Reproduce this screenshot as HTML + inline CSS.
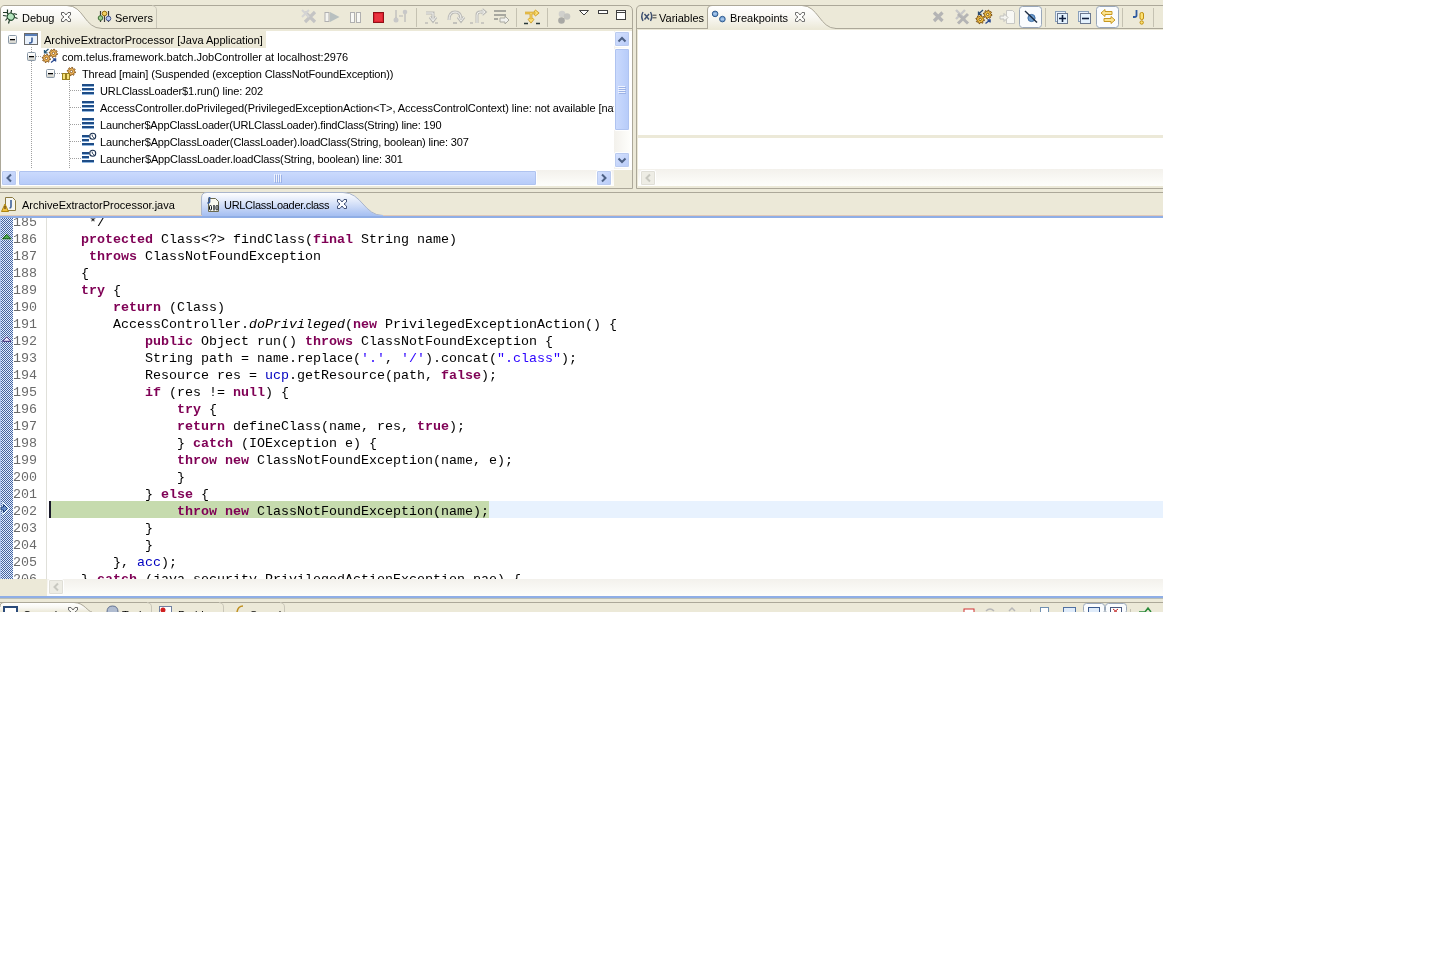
<!DOCTYPE html>
<html><head><meta charset="utf-8"><style>
*{box-sizing:border-box;margin:0;padding:0}
html,body{width:1440px;height:960px;background:#fff;overflow:hidden}
body{position:relative;font-family:"Liberation Sans",sans-serif;font-size:11px;color:#000}
.a{position:absolute}
svg{position:absolute;overflow:visible}
#app{position:absolute;left:0;top:0;width:1163px;height:612px;background:#ECE9D8;overflow:hidden;will-change:transform}
.t{position:absolute;white-space:nowrap;font-size:11px;line-height:17px}
.code{position:absolute;left:49px;white-space:pre;font-family:"Liberation Mono",monospace;font-size:13.33px;line-height:17px;height:17px}
.ln{position:absolute;left:13px;white-space:pre;font-family:"Liberation Mono",monospace;font-size:13.33px;line-height:17px;color:#6A6A6A}
.k{color:#7F0055;font-weight:bold}
.s{color:#2A00FF}
.f{color:#0000C0}
.i{font-style:italic}
.btn{position:absolute;width:16px;height:16px;border-radius:2px;background:linear-gradient(135deg,#D6E2FE,#B8CBF8);border:1px solid #fff;box-shadow:0 0 0 1px #BACBF0 inset}
.dbtn{position:absolute;width:16px;height:16px;border-radius:2px;background:#EEEDE5;border:1px solid #fff;box-shadow:0 0 0 1px #E0DFD7 inset}
.track{position:absolute;background:linear-gradient(#F3F1EC,#FEFEFB)}
.vtrack{position:absolute;background:linear-gradient(90deg,#F3F1EC,#FEFEFB)}
.thumbh{position:absolute;border-radius:2px;background:linear-gradient(#CCDBFD,#B6CBF9);border:1px solid #fff;box-shadow:0 0 0 1px #AFC3F0 inset}
.thumbv{position:absolute;border-radius:2px;background:linear-gradient(90deg,#CCDBFD,#B6CBF9);border:1px solid #fff;box-shadow:0 0 0 1px #AFC3F0 inset}
</style></head><body>
<div id="app">
<svg style="left:0;top:0" width="1163" height="612">
<defs>
<linearGradient id="tabw" x1="0" y1="0" x2="0" y2="1"><stop offset="0" stop-color="#FFFFFF"/><stop offset="0.5" stop-color="#F8F7F2"/><stop offset="1" stop-color="#ECE9D8"/></linearGradient>
<linearGradient id="tabb" x1="0" y1="0" x2="0" y2="1"><stop offset="0" stop-color="#FFFFFF"/><stop offset="0.35" stop-color="#E2EAFA"/><stop offset="1" stop-color="#A4BEF2"/></linearGradient>
<linearGradient id="expg" x1="0" y1="0" x2="0" y2="1"><stop offset="0" stop-color="#FFFFFF"/><stop offset="0.5" stop-color="#F4F4F2"/><stop offset="1" stop-color="#C8C8C0"/></linearGradient>
</defs>
<path d="M0.5,188.5 V10 Q0.5,5.5 5,5.5 H627 Q632.5,5.5 632.5,11 V188.5 Z" fill="#ECE9D8" stroke="#ACA899"/>
<path d="M1,29 V10 Q1,6 5,6 H67 C84,6 84,28 102,28.5 H1 Z" fill="url(#tabw)"/>
<path d="M67,5.5 C84,5.5 84,28.5 102,28.5 H632" fill="none" stroke="#ACA899"/>
<path d="M156.5,28 V10 Q156.5,6 152,5.5" fill="none" stroke="#C9C6B8"/>
<path d="M636.5,188.5 V10 Q636.5,5.5 641,5.5 H1163" fill="none" stroke="#ACA899"/>
<path d="M636.5,188.5 H1163 M636.5,28.5 H708 M835,28.5 H1163" stroke="#ACA899"/>
<path d="M708,29 V10 Q708,6 712,6 H802 C818,6 820,28 836,28.5 H708 Z" fill="url(#tabw)"/>
<path d="M707.5,28 V10 Q707.5,5.5 712,5.5 H802 C818,5.5 820,28.5 836,28.5" fill="none" stroke="#ACA899"/>
<path d="M0,192.5 H1163" stroke="#ACA899"/>
<path d="M201.5,216 V198 Q201.5,192.5 207,192.5 H343 C362,192.5 364,215.5 383,215.5 Z" fill="url(#tabb)" stroke="#A9B5CC"/>
<rect x="0" y="215" width="1163" height="1" fill="#E0C8B8"/>
<rect x="202" y="215" width="181" height="1" fill="#A8C0F0"/>
<rect x="0" y="216" width="1163" height="2" fill="#8FAEE6"/>
<rect x="0" y="596" width="1163" height="2" fill="#8FAEE6"/><rect x="0" y="598" width="1163" height="1" fill="#B8BEB8"/>
<path d="M0,602.5 H1163" stroke="#ACA899"/>
<path d="M0,612 V607 Q0,603 4,603 H74 C84,603 88,612 92,612 Z" fill="url(#tabw)"/>
<path d="M0,607 Q0,602.5 4,602.5 H74 C84,602.5 88,612 92,612" fill="none" stroke="#ACA899"/>
<path d="M151.5,612 V607 Q151.5,603 147,602.5 M223.5,612 V607 Q223.5,603 219,602.5 M284.5,612 V607 Q284.5,603 280,602.5" fill="none" stroke="#C9C6B8"/>
</svg>
<div class="t" style="left:22px;top:10px;">Debug</div>
<div class="t" style="left:115px;top:10px;">Servers</div>
<div class="a" style="left:1px;top:31px;width:631px;height:139px;background:#fff"></div>
<div class="a" style="left:41px;top:31px;width:225px;height:17px;background:#ECE9D8"></div>
<div class="a" style="left:0;top:0;width:614px;height:170px;overflow:hidden">
<div class="t" style="left:44px;top:32px;letter-spacing:0px">ArchiveExtractorProcessor [Java Application]</div>
<div class="t" style="left:62px;top:49px;letter-spacing:0px">com.telus.framework.batch.JobController at localhost:2976</div>
<div class="t" style="left:82px;top:66px;letter-spacing:-0.12px">Thread [main] (Suspended (exception ClassNotFoundException))</div>
<div class="t" style="left:100px;top:83px;letter-spacing:-0.12px">URLClassLoader$1.run() line: 202</div>
<div class="t" style="left:100px;top:100px;letter-spacing:-0.07px">AccessController.doPrivileged(PrivilegedExceptionAction&lt;T&gt;, AccessControlContext) line: not available [native method]</div>
<div class="t" style="left:100px;top:117px;letter-spacing:-0.18px">Launcher$AppClassLoader(URLClassLoader).findClass(String) line: 190</div>
<div class="t" style="left:100px;top:134px;letter-spacing:-0.15px">Launcher$AppClassLoader(ClassLoader).loadClass(String, boolean) line: 307</div>
<div class="t" style="left:100px;top:151px;letter-spacing:-0.12px">Launcher$AppClassLoader.loadClass(String, boolean) line: 301</div>
</div>
<svg style="left:0;top:0" width="1163" height="612"><path d="M31.5,47 V168 M69.5,81 V168" stroke="#A0A0A0" stroke-dasharray="1 1"/><path d="M36,56.5 H42 M55,73.5 H62" stroke="#A0A0A0" stroke-dasharray="1 1"/><path d="M70,90.5 H81" stroke="#A0A0A0" stroke-dasharray="1 1"/><path d="M70,107.5 H81" stroke="#A0A0A0" stroke-dasharray="1 1"/><path d="M70,124.5 H81" stroke="#A0A0A0" stroke-dasharray="1 1"/><path d="M70,141.5 H81" stroke="#A0A0A0" stroke-dasharray="1 1"/><path d="M70,158.5 H81" stroke="#A0A0A0" stroke-dasharray="1 1"/><rect x="8.5" y="35.5" width="8" height="8" rx="1" fill="url(#expg)" stroke="#8A99A8"/><rect x="10" y="39" width="5" height="1.3" fill="#000"/><rect x="27.5" y="52.5" width="8" height="8" rx="1" fill="url(#expg)" stroke="#8A99A8"/><rect x="29" y="56" width="5" height="1.3" fill="#000"/><rect x="46.5" y="69.5" width="8" height="8" rx="1" fill="url(#expg)" stroke="#8A99A8"/><rect x="48" y="73" width="5" height="1.3" fill="#000"/><rect x="24.5" y="33.5" width="13" height="11" fill="#EAF2FC" stroke="#6B6B6B"/><rect x="25" y="34" width="12" height="2" fill="#5A7FB8"/><path d="M32,37.5 V41 Q32,43 30,43 H29" fill="none" stroke="#3C5F9A" stroke-width="1.6"/><path d="M57.58,53.71 L57.42,54.52 L56.07,54.73 L55.74,55.22 L56.06,56.55 L55.38,57.00 L54.28,56.19 L53.70,56.31 L52.99,57.48 L52.18,57.32 L51.97,55.97 L51.48,55.64 L50.15,55.96 L49.70,55.28 L50.51,54.18 L50.39,53.60 L49.22,52.89 L49.38,52.08 L50.73,51.87 L51.06,51.38 L50.74,50.05 L51.42,49.60 L52.52,50.41 L53.10,50.29 L53.81,49.12 L54.62,49.28 L54.83,50.63 L55.32,50.96 L56.65,50.64 L57.10,51.32 L56.29,52.42 L56.41,53.00Z" fill="#F2B85A" stroke="#7A4A10" stroke-width="0.9"/><circle cx="53.4" cy="53.3" r="1.2" fill="#fff" stroke="#7A4A10" stroke-width="0.8"/><path d="M50.58,58.81 L50.42,59.62 L49.07,59.83 L48.74,60.32 L49.06,61.65 L48.38,62.10 L47.28,61.29 L46.70,61.41 L45.99,62.58 L45.18,62.42 L44.97,61.07 L44.48,60.74 L43.15,61.06 L42.70,60.38 L43.51,59.28 L43.39,58.70 L42.22,57.99 L42.38,57.18 L43.73,56.97 L44.06,56.48 L43.74,55.15 L44.42,54.70 L45.52,55.51 L46.10,55.39 L46.81,54.22 L47.62,54.38 L47.83,55.73 L48.32,56.06 L49.65,55.74 L50.10,56.42 L49.29,57.52 L49.41,58.10Z" fill="#F2B85A" stroke="#7A4A10" stroke-width="0.9"/><circle cx="46.4" cy="58.4" r="1.2" fill="#fff" stroke="#7A4A10" stroke-width="0.8"/><path d="M48.5,49 L44.5,52.5 M44.5,50 V52.8 H47.5" fill="none" stroke="#2A5A78" stroke-width="1.3"/><path d="M51,62.5 L55.5,59 M52.8,58.8 H55.6 V61.6" fill="none" stroke="#2A4A90" stroke-width="1.3"/><path d="M75.58,71.91 L75.42,72.72 L74.07,72.93 L73.74,73.42 L74.06,74.75 L73.38,75.20 L72.28,74.39 L71.70,74.51 L70.99,75.68 L70.18,75.52 L69.97,74.17 L69.48,73.84 L68.15,74.16 L67.70,73.48 L68.51,72.38 L68.39,71.80 L67.22,71.09 L67.38,70.28 L68.73,70.07 L69.06,69.58 L68.74,68.25 L69.42,67.80 L70.52,68.61 L71.10,68.49 L71.81,67.32 L72.62,67.48 L72.83,68.83 L73.32,69.16 L74.65,68.84 L75.10,69.52 L74.29,70.62 L74.41,71.20Z" fill="#F2B85A" stroke="#7A4A10" stroke-width="0.9"/><circle cx="71.4" cy="71.5" r="1.2" fill="#fff" stroke="#7A4A10" stroke-width="0.8"/><rect x="62.5" y="73.5" width="3" height="6" fill="#F6E27A" stroke="#9A8020"/><rect x="66.5" y="73.5" width="3" height="6" fill="#F6E27A" stroke="#9A8020"/><rect x="82" y="84" width="12" height="2" fill="#1E4C86"/><rect x="82" y="86" width="12" height="1" fill="#8FB6E0"/><rect x="82" y="88" width="12" height="2" fill="#1E4C86"/><rect x="82" y="90" width="12" height="1" fill="#8FB6E0"/><rect x="82" y="92" width="12" height="2" fill="#1E4C86"/><rect x="82" y="94" width="12" height="1" fill="#8FB6E0"/><rect x="82" y="101" width="12" height="2" fill="#1E4C86"/><rect x="82" y="103" width="12" height="1" fill="#8FB6E0"/><rect x="82" y="105" width="12" height="2" fill="#1E4C86"/><rect x="82" y="107" width="12" height="1" fill="#8FB6E0"/><rect x="82" y="109" width="12" height="2" fill="#1E4C86"/><rect x="82" y="111" width="12" height="1" fill="#8FB6E0"/><rect x="82" y="118" width="12" height="2" fill="#1E4C86"/><rect x="82" y="120" width="12" height="1" fill="#8FB6E0"/><rect x="82" y="122" width="12" height="2" fill="#1E4C86"/><rect x="82" y="124" width="12" height="1" fill="#8FB6E0"/><rect x="82" y="126" width="12" height="2" fill="#1E4C86"/><rect x="82" y="128" width="12" height="1" fill="#8FB6E0"/><rect x="82" y="135" width="7" height="2" fill="#1E4C86"/><rect x="82" y="137" width="7" height="1" fill="#8FB6E0"/><rect x="82" y="139" width="7" height="2" fill="#1E4C86"/><rect x="82" y="141" width="7" height="1" fill="#8FB6E0"/><rect x="82" y="143" width="12" height="2" fill="#1E4C86"/><rect x="82" y="145" width="12" height="1" fill="#8FB6E0"/><circle cx="92.7" cy="136.3" r="3" fill="#fff" stroke="#1A3050" stroke-width="1.1"/><path d="M92,134.5 L92.5,136.5 L94,137.8" fill="none" stroke="#1A3050" stroke-width="0.9"/><rect x="82" y="152" width="7" height="2" fill="#1E4C86"/><rect x="82" y="154" width="7" height="1" fill="#8FB6E0"/><rect x="82" y="156" width="7" height="2" fill="#1E4C86"/><rect x="82" y="158" width="7" height="1" fill="#8FB6E0"/><rect x="82" y="160" width="12" height="2" fill="#1E4C86"/><rect x="82" y="162" width="12" height="1" fill="#8FB6E0"/><circle cx="92.7" cy="153.3" r="3" fill="#fff" stroke="#1A3050" stroke-width="1.1"/><path d="M92,151.5 L92.5,153.5 L94,154.8" fill="none" stroke="#1A3050" stroke-width="0.9"/></svg>
<div class="vtrack" style="left:614px;top:31px;width:16px;height:138px"></div>
<div class="btn" style="left:614px;top:31px"></div>
<div class="thumbv" style="left:614px;top:48px;width:16px;height:83px"></div>
<div class="btn" style="left:614px;top:152px"></div>
<div class="track" style="left:1px;top:170px;width:613px;height:16px"></div>
<div class="btn" style="left:1px;top:170px"></div>
<div class="thumbh" style="left:18px;top:170px;width:519px;height:16px"></div>
<div class="btn" style="left:596px;top:170px"></div>
<svg style="left:0;top:0" width="1163" height="612"><path d="M618.5,41.5 L622,38 L625.5,41.5" fill="none" stroke="#4D6185" stroke-width="2"/><path d="M618.5,158.5 L622,162 L625.5,158.5" fill="none" stroke="#4D6185" stroke-width="2"/><path d="M11,174.5 L7.5,178 L11,181.5" fill="none" stroke="#4D6185" stroke-width="2"/><path d="M602,174.5 L605.5,178 L602,181.5" fill="none" stroke="#4D6185" stroke-width="2"/><path d="M618,86.5 H625 M618,88.5 H625 M618,90.5 H625 M618,92.5 H625" stroke="#EEF3FE" stroke-width="1"/><path d="M619,87.5 H626 M619,89.5 H626 M619,91.5 H626 M619,93.5 H626" stroke="#9CB2E6" stroke-width="1"/><path d="M274.5,174 V182 M276.5,174 V182 M278.5,174 V182 M280.5,174 V182" stroke="#EEF3FE" stroke-width="1"/><path d="M275.5,175 V183 M277.5,175 V183 M279.5,175 V183 M281.5,175 V183" stroke="#9CB2E6" stroke-width="1"/><path d="M58,583.5 L54.5,587 L58,590.5" fill="none" stroke="#C8C8C0" stroke-width="2"/></svg>
<svg style="left:0;top:0" width="1163" height="612"><ellipse cx="10.8" cy="16.7" rx="3.6" ry="3.4" transform="rotate(35 10.8 16.7)" fill="#B5E4BE" stroke="#1F4A2A" stroke-width="1.1"/><path d="M3,12.5 H8 M7.5,9.5 V14 M11.5,10 L11,13 M13.5,13.5 L17,14.5 M3,15.5 L6.5,16 M15,17.5 L17.5,18.5 M5.5,20.5 L7.5,18 M8.5,23.5 L9.5,20" stroke="#1F3A28" stroke-width="1.2"/><path d="M61.5,12.5 H64 L66,15 L68,12.5 H70.5 V15 L68,17 L70.5,19 V21.5 H68 L66,19 L64,21.5 H61.5 V19 L64,17 L61.5,15 Z" fill="#fff" fill-opacity="0.6" stroke="#5A5A5A" stroke-width="0.95"/><path d="M100.5,11 V22 M104.5,11 V22 M108.5,11 V22" stroke="#3A3A3A" stroke-width="1.2"/><circle cx="100.5" cy="18" r="2.3" fill="#9ED090" stroke="#3A6A30"/><circle cx="104.5" cy="13.5" r="2.3" fill="#F2D060" stroke="#9A7010"/><circle cx="108.5" cy="18.5" r="2.3" fill="#B8C8F0" stroke="#4A5A90"/><path d="M643,12 Q640.5,16.5 643,21 M650.5,12 Q653,16.5 650.5,21 M644.5,14 L649,19.5 M649,14 L644.5,19.5" fill="none" stroke="#3E5070" stroke-width="1.4"/><path d="M652.5,15.2 H656.5 M652.5,17.8 H656.5" stroke="#404040" stroke-width="1"/><circle cx="715.1" cy="13.9" r="2.8" fill="#7EA8D8" stroke="#2E5A8E"/><circle cx="722.4" cy="19.1" r="2.8" fill="#7EA8D8" stroke="#2E5A8E"/><path d="M713.5,13.9 H716.7 M720.8,19.1 H724" stroke="#DDEEFF" stroke-width="0.8"/><path d="M795.5,12.5 H798 L800,15 L802,12.5 H804.5 V15 L802,17 L804.5,19 V21.5 H802 L800,19 L798,21.5 H795.5 V19 L798,17 L795.5,15 Z" fill="#fff" fill-opacity="0.6" stroke="#6A6A6A" stroke-width="0.95"/><path d="M5.5,197.5 H12.5 L15.5,200.5 V210.5 H5.5 Z" fill="#F6F6F0" stroke="#8A7A40"/><path d="M11,200 V206.5 Q11,208 9.5,208" fill="none" stroke="#3C5F9A" stroke-width="1.6"/><path d="M5,204 L8.5,211.5 H1.5 Z" fill="#F0C040" stroke="#B08810"/><path d="M5,206 V209" stroke="#402000" stroke-width="1"/><path d="M208.5,198.5 H215.5 L218.5,201.5 V211.5 H208.5 Z" fill="#FAFAF0" stroke="#6A6A50"/><path d="M209.5,197 V201.5 Q209.5,203 207.5,203" fill="none" stroke="#3C5F9A" stroke-width="1.8"/><rect x="209.5" y="205.5" width="2" height="4.5" rx="1" fill="none" stroke="#101820" stroke-width="1"/><path d="M214,205 V210.5" stroke="#101820" stroke-width="1.3"/><rect x="216" y="205.5" width="2" height="4.5" rx="1" fill="none" stroke="#101820" stroke-width="1"/><path d="M337.5,199.5 H340 L342,202 L344,199.5 H346.5 V202 L344,204 L346.5,206 V208.5 H344 L342,206 L340,208.5 H337.5 V206 L340,204 L337.5,202 Z" fill="#fff" fill-opacity="0.9" stroke="#3A4A70" stroke-width="0.95"/></svg>
<svg style="left:0;top:0" width="1163" height="612"><path d="M305,12 L315,22 M315,12 L305,22" stroke="#C4C4C4" stroke-width="3.2"/><path d="M302,10 L309,17 M309,10 L302,17" stroke="#D4D4D4" stroke-width="2"/><rect x="325" y="12.5" width="4" height="9" fill="#F4F4F0" stroke="#B0B0B0"/><path d="M330,12 L339.5,17 L330,22 Z" fill="#B8C0C0"/><rect x="350.5" y="12.5" width="4" height="10" fill="#F8F8F4" stroke="#B0B0B0"/><rect x="356.5" y="12.5" width="4" height="10" fill="#F8F8F4" stroke="#B0B0B0"/><rect x="373.5" y="12.5" width="10" height="10" fill="#E02030" stroke="#901018"/><rect x="375" y="14" width="7" height="7" fill="#E8343F"/><circle cx="396" cy="20" r="2.5" fill="#C8C8C8"/><circle cx="405" cy="12" r="2.3" fill="#C8C8C8"/><path d="M396,10 V18 M405,14 V22 M399,16 H403" stroke="#B8B8B8" stroke-width="1.2"/><rect x="416" y="8" width="1" height="19" fill="#C5C2B2"/><path d="M426,13 H433 V20 M430,17 L433,21 L436,17" fill="none" stroke="#BCBCB8" stroke-width="3"/><path d="M426,13 H433 V20 M430,17 L433,21 L436,17" fill="none" stroke="#F2F2EE" stroke-width="1"/><path d="M425,23 H428 M435,23 H438" stroke="#A8A8A8" stroke-width="1.2"/><path d="M449,20 Q449,12 455,12 Q461,12 461,19 M458,17 L461,21 L464,17" fill="none" stroke="#BCBCB8" stroke-width="3"/><path d="M449,20 Q449,12 455,12 Q461,12 461,19 M458,17 L461,21 L464,17" fill="none" stroke="#F2F2EE" stroke-width="1"/><path d="M453,23 H457" stroke="#A8A8A8" stroke-width="1.2"/><path d="M477,23 V15 Q477,12 480,12 H484 M482,9.5 L485,12 L482,14.5" fill="none" stroke="#BCBCB8" stroke-width="3"/><path d="M477,23 V15 Q477,12 480,12 H484 M482,9.5 L485,12 L482,14.5" fill="none" stroke="#F2F2EE" stroke-width="1"/><path d="M470,23 H473 M481,23 H484" stroke="#A8A8A8" stroke-width="1.2"/><rect x="494" y="10" width="12" height="2" fill="#A8A8A0"/><rect x="494" y="14" width="12" height="2" fill="#A8A8A0"/><rect x="494" y="18" width="4" height="2" fill="#A8A8A0"/><path d="M500,18 H505 V16 L509,20 L505,24 V22 H500 Z" fill="#F0F0EC" stroke="#A8A8A0"/><rect x="516" y="8" width="1" height="19" fill="#C5C2B2"/><path d="M525,13 H537 M534.5,10.5 L537.5,13 L534.5,15.5 M531,13 V21 M528.5,18.5 L531,21.5 L533.5,18.5" fill="none" stroke="#C89010" stroke-width="2.6"/><path d="M525,13 H537 M534.5,10.5 L537.5,13 L534.5,15.5 M531,13 V21 M528.5,18.5 L531,21.5 L533.5,18.5" fill="none" stroke="#FCE27A" stroke-width="1.2"/><path d="M524,23.5 H528 M536,23.5 H540" stroke="#2A3A3A" stroke-width="1.5"/><rect x="547" y="8" width="1" height="19" fill="#C5C2B2"/><circle cx="562" cy="14" r="3.3" fill="#D0D0CC"/><circle cx="567" cy="16.5" r="3.3" fill="#C4C4C0"/><circle cx="561.5" cy="20.5" r="3.3" fill="#A8A8A4"/><path d="M579.5,10.5 H588.5 L584,15 Z" fill="#fff" stroke="#404040"/><rect x="598.5" y="10.5" width="9" height="3" fill="#fff" stroke="#404040"/><rect x="616.5" y="10.5" width="9" height="9" fill="#fff" stroke="#404040"/><path d="M617,12.5 H625" stroke="#404040" stroke-width="1"/></svg>
<svg style="left:0;top:0" width="1163" height="612"><path d="M934,12.5 L942.5,21 M942.5,12.5 L934,21" stroke="#B4B4B4" stroke-width="3.2"/><path d="M956,10 L965,19 M965,10 L956,19" stroke="#C8C8C8" stroke-width="2.4"/><path d="M958,14 L968,23.5 M968,14 L958,23.5" stroke="#B4B4B4" stroke-width="3"/><path d="M991.98,14.82 L991.81,15.65 L990.43,15.86 L990.09,16.36 L990.43,17.72 L989.73,18.19 L988.60,17.36 L988.00,17.48 L987.28,18.68 L986.45,18.51 L986.24,17.13 L985.74,16.79 L984.38,17.13 L983.91,16.43 L984.74,15.30 L984.62,14.70 L983.42,13.98 L983.59,13.15 L984.97,12.94 L985.31,12.44 L984.97,11.08 L985.67,10.61 L986.80,11.44 L987.40,11.32 L988.12,10.12 L988.95,10.29 L989.16,11.67 L989.66,12.01 L991.02,11.67 L991.49,12.37 L990.66,13.50 L990.78,14.10Z" fill="#F2C040" stroke="#6A4008" stroke-width="0.9"/><circle cx="987.7" cy="14.4" r="1.2" fill="#FFF6C0" stroke="#6A4008" stroke-width="0.8"/><path d="M984.48,19.82 L984.31,20.65 L982.93,20.86 L982.59,21.36 L982.93,22.72 L982.23,23.19 L981.10,22.36 L980.50,22.48 L979.78,23.68 L978.95,23.51 L978.74,22.13 L978.24,21.79 L976.88,22.13 L976.41,21.43 L977.24,20.30 L977.12,19.70 L975.92,18.98 L976.09,18.15 L977.47,17.94 L977.81,17.44 L977.47,16.08 L978.17,15.61 L979.30,16.44 L979.90,16.32 L980.62,15.12 L981.45,15.29 L981.66,16.67 L982.16,17.01 L983.52,16.67 L983.99,17.37 L983.16,18.50 L983.28,19.10Z" fill="#F2C040" stroke="#6A4008" stroke-width="0.9"/><circle cx="980.2" cy="19.4" r="1.2" fill="#FFF6C0" stroke="#6A4008" stroke-width="0.8"/><path d="M983,10 L978.5,14 M978.5,11.5 V14.3 H981.5" fill="none" stroke="#2A4A70" stroke-width="1.3"/><path d="M985.5,23.5 L990,20 M987.3,19.8 H990.1 V22.6" fill="none" stroke="#2A4A90" stroke-width="1.3"/><path d="M1006.5,10.5 H1012.5 L1014.5,12.5 V23.5 H1006.5 Z" fill="#F8F8F4" stroke="#C8C8C4"/><path d="M1000,16 H1004 V13.5 L1008,17.5 L1004,21.5 V19 H1000 Z" fill="#F4F4F0" stroke="#C0C0BC"/><rect x="1019.5" y="6.5" width="22" height="21" rx="3" fill="#FAFCFE" stroke="#9AA8BA"/><circle cx="1031.5" cy="18" r="3.6" fill="#6E9ED0" stroke="#3D6EA6"/><path d="M1025,11 L1037,22.5" stroke="#1A2A40" stroke-width="1.4"/><rect x="1045" y="8" width="1" height="19" fill="#C5C2B2"/><rect x="1055.5" y="11.5" width="10" height="10" fill="#E8F0FA" stroke="#8AA0BA"/><rect x="1057.5" y="13.5" width="10" height="10" fill="#E4F2FE" stroke="#6A7890"/><path d="M1062.5,15 V22 M1059,18.5 H1066" stroke="#102040" stroke-width="1.6"/><rect x="1078.5" y="11.5" width="10" height="10" fill="#E8F0FA" stroke="#8AA0BA"/><rect x="1080.5" y="13.5" width="10" height="10" fill="#E4F2FE" stroke="#6A7890"/><path d="M1082,18.5 H1089" stroke="#102040" stroke-width="1.6"/><rect x="1096.5" y="6.5" width="22" height="21" rx="3" fill="#FAFCFE" stroke="#9AA8BA"/><path d="M1101,13 L1105,9.5 V11.5 H1112 V14.5 H1105 V16.5 Z" fill="#FCE490" stroke="#C89820"/><path d="M1115,20 L1111,16.5 V18.5 H1104 V21.5 H1111 V23.5 Z" fill="#FCE490" stroke="#C89820"/><rect x="1122" y="8" width="1" height="19" fill="#C5C2B2"/><path d="M1136.5,10 V15.5 Q1136.5,17 1134.5,17 H1133" fill="none" stroke="#2E5AA0" stroke-width="1.8"/><rect x="1140" y="12.5" width="3.5" height="7" rx="1.5" fill="#FCE070" stroke="#C09010"/><circle cx="1141.7" cy="22.5" r="1.7" fill="#FCE070" stroke="#C09010"/><rect x="1153" y="8" width="1" height="19" fill="#C5C2B2"/></svg>
<div class="t" style="left:659px;top:10px;">Variables</div>
<div class="t" style="left:730px;top:10px;">Breakpoints</div>
<div class="a" style="left:638px;top:30px;width:525px;height:105px;background:#fff"></div>
<div class="a" style="left:638px;top:138px;width:525px;height:31px;background:#fff"></div>
<div class="track" style="left:638px;top:169px;width:525px;height:17px"></div>
<div class="dbtn" style="left:640px;top:170px"></div>
<svg style="left:0;top:0" width="1163" height="612"><path d="M650,174.5 L646.5,178 L650,181.5" fill="none" stroke="#C8C8C0" stroke-width="2"/></svg>
<div class="t" style="left:22px;top:197px;">ArchiveExtractorProcessor.java</div>
<div class="t" style="left:224px;top:197px;letter-spacing:-0.3px">URLClassLoader.class</div>
<div class="a" style="left:0;top:218px;width:1163px;height:361px;background:#fff;overflow:hidden">
<div class="a" style="left:0px;top:0px;width:13px;height:361px;background:#A9C0EA"></div>
<div class="a" style="left:1px;top:0px;width:12px;height:361px;background:conic-gradient(#46649F 25%,#E2EEFF 0 50%,#46649F 0 75%,#E2EEFF 0) 0 0/2px 2px"></div>
<div class="a" style="left:46px;top:0px;width:1px;height:361px;background:#E0E0DA"></div>
<div class="a" style="left:51px;top:283px;width:1112px;height:17px;background:#E8F2FE"></div>
<div class="a" style="left:51px;top:283px;width:438px;height:17px;background:#C6DBAE"></div>
<div class="a" style="left:49px;top:283px;width:2px;height:17px;background:#1A1A2A"></div>
<div class="ln" style="top:-4px">185</div>
<div class="code" style="top:-4px">     */</div>
<div class="ln" style="top:13px">186</div>
<div class="code" style="top:13px">    <span class="k">protected</span> Class&lt;?&gt; findClass(<span class="k">final</span> String name)</div>
<div class="ln" style="top:30px">187</div>
<div class="code" style="top:30px">     <span class="k">throws</span> ClassNotFoundException</div>
<div class="ln" style="top:47px">188</div>
<div class="code" style="top:47px">    {</div>
<div class="ln" style="top:64px">189</div>
<div class="code" style="top:64px">    <span class="k">try</span> {</div>
<div class="ln" style="top:81px">190</div>
<div class="code" style="top:81px">        <span class="k">return</span> (Class)</div>
<div class="ln" style="top:98px">191</div>
<div class="code" style="top:98px">        AccessController.<span class="i">doPrivileged</span>(<span class="k">new</span> PrivilegedExceptionAction() {</div>
<div class="ln" style="top:115px">192</div>
<div class="code" style="top:115px">            <span class="k">public</span> Object run() <span class="k">throws</span> ClassNotFoundException {</div>
<div class="ln" style="top:132px">193</div>
<div class="code" style="top:132px">            String path = name.replace(<span class="s">&#x27;.&#x27;</span>, <span class="s">&#x27;/&#x27;</span>).concat(<span class="s">&quot;.class&quot;</span>);</div>
<div class="ln" style="top:149px">194</div>
<div class="code" style="top:149px">            Resource res = <span class="f">ucp</span>.getResource(path, <span class="k">false</span>);</div>
<div class="ln" style="top:166px">195</div>
<div class="code" style="top:166px">            <span class="k">if</span> (res != <span class="k">null</span>) {</div>
<div class="ln" style="top:183px">196</div>
<div class="code" style="top:183px">                <span class="k">try</span> {</div>
<div class="ln" style="top:200px">197</div>
<div class="code" style="top:200px">                <span class="k">return</span> defineClass(name, res, <span class="k">true</span>);</div>
<div class="ln" style="top:217px">198</div>
<div class="code" style="top:217px">                } <span class="k">catch</span> (IOException e) {</div>
<div class="ln" style="top:234px">199</div>
<div class="code" style="top:234px">                <span class="k">throw</span> <span class="k">new</span> ClassNotFoundException(name, e);</div>
<div class="ln" style="top:251px">200</div>
<div class="code" style="top:251px">                }</div>
<div class="ln" style="top:268px">201</div>
<div class="code" style="top:268px">            } <span class="k">else</span> {</div>
<div class="ln" style="top:285px">202</div>
<div class="code" style="top:285px">                <span class="k">throw</span> <span class="k">new</span> ClassNotFoundException(name);</div>
<div class="ln" style="top:302px">203</div>
<div class="code" style="top:302px">            }</div>
<div class="ln" style="top:319px">204</div>
<div class="code" style="top:319px">            }</div>
<div class="ln" style="top:336px">205</div>
<div class="code" style="top:336px">        }, <span class="f">acc</span>);</div>
<div class="ln" style="top:353px">206</div>
<div class="code" style="top:353px">    } <span class="k">catch</span> (java.security.PrivilegedActionException pae) {</div>

</div>
<div class="track" style="left:0;top:579px;width:1163px;height:17px"></div>
<div class="a" style="left:0px;top:579px;width:47px;height:17px;background:#ECE9D8"></div>
<div class="dbtn" style="left:48px;top:579px"></div>
<svg style="left:0;top:0" width="1163" height="612"><path d="M58,583.5 L54.5,587 L58,590.5" fill="none" stroke="#C8C8C0" stroke-width="2"/></svg>
<svg style="left:0;top:0" width="1163" height="612"><path d="M1.5,239.5 L6.7,233.5 L12,239.5 Z" fill="#E8FFF0"/><path d="M2.5,238.8 L6.7,234.3 L11,238.8 Z" fill="#4AAA4A" stroke="#0A4A12" stroke-width="1"/><path d="M1.5,342 L6.7,336 L12,342 Z" fill="#F4F8FF"/><path d="M2.5,341.3 L6.7,336.8 L11,341.3 Z" fill="#F0E8FF" stroke="#2A1A6A" stroke-width="1"/><path d="M1,507 H3.5 V504 L8,508.5 L3.5,513 V510 H1 Z" fill="#E8F8FF" stroke="#E8F8FF" stroke-width="2"/><path d="M1,507 H3.5 V504.5 L7.5,508.5 L3.5,512.5 V510 H1 Z" fill="#6A90C8" stroke="#183A78" stroke-width="1"/></svg>
<svg style="left:0;top:0" width="1163" height="612"><rect x="4" y="607" width="13" height="8" fill="#fff" stroke="#2A4A7A" stroke-width="2"/><path d="M68.5,607.5 H71 L73,610 L75,607.5 H77.5 V610 L75,612 L77.5,614 V616.5 H75 L73,614 L71,616.5 H68.5 V614 L71,612 L68.5,610 Z" fill="#fff" fill-opacity="0.6" stroke="#606060" stroke-width="0.95"/><path d="M107,612 Q107,606 112.5,606 Q118,606 118,612" fill="#B0BCD0" stroke="#607090"/><rect x="159.5" y="606.5" width="12" height="8" fill="#fff" stroke="#7080A0"/><circle cx="163" cy="610" r="2.5" fill="#D02020"/><path d="M237,612 Q238,606 243,606" fill="none" stroke="#C09020" stroke-width="1.5"/><rect x="964" y="609" width="10" height="4" fill="#fff" stroke="#D03030"/><path d="M986,611 Q990,607 994,611 M1009,611 L1012,608 L1015,611" stroke="#B8B8B8" stroke-width="1.5" fill="none"/><rect x="1030" y="609" width="1" height="4" fill="#C5C2B2"/><rect x="1040.5" y="607.5" width="8" height="6" fill="#fff" stroke="#7090B0"/><rect x="1063.5" y="607.5" width="12" height="6" fill="#E0ECFA" stroke="#5070A0"/><rect x="1083.5" y="603.5" width="21" height="10" rx="3" fill="#FAFCFE" stroke="#9AA8BA"/><rect x="1088.5" y="607.5" width="11" height="6" fill="#E0ECFA" stroke="#3A5A90"/><rect x="1105.5" y="603.5" width="21" height="10" rx="3" fill="#FAFCFE" stroke="#9AA8BA"/><rect x="1110.5" y="607.5" width="11" height="6" fill="#fff" stroke="#4A5A80"/><path d="M1113,609 L1118,613 M1118,609 L1113,613" stroke="#C02020"/><rect x="1130" y="609" width="1" height="4" fill="#C5C2B2"/><path d="M1139,612 H1145 L1148,608 L1151,612" stroke="#2A8A3A" stroke-width="1.5" fill="none"/></svg>
<div class="t" style="left:23px;top:607px;">Console</div>
<div class="t" style="left:122px;top:607px;">Tasks</div>
<div class="t" style="left:178px;top:607px;">Problems</div>
<div class="t" style="left:250px;top:607px;">Search</div>
</div>
</body></html>
